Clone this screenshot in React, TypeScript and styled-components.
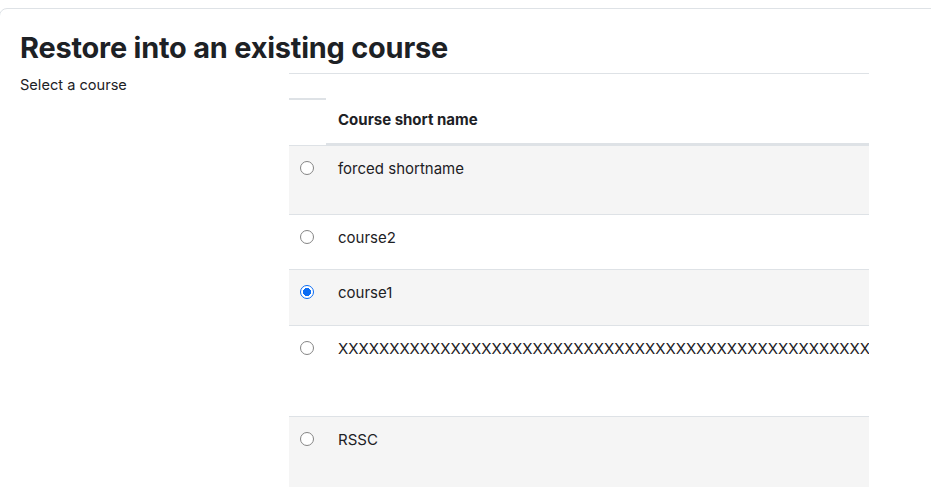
import React from 'react'
import styled, { createGlobalStyle } from 'styled-components'

const GlobalStyle = createGlobalStyle`
    html, body {
        margin: 0;
        padding: 0;
        background: #ffffff;
        overflow: hidden;
    }
    body {
        font-family: Inter, "Noto Sans", "Liberation Sans", sans-serif;
        color: #1d2125;
    }
`

type CourseRow = {
    name: string;
    height: number;
    checked?: boolean;
}

const courses: CourseRow[] = [
    { name: 'forced shortname', height: 69 },
    { name: 'course2', height: 55 },
    { name: 'course1', height: 56, checked: true },
    { name: 'X'.repeat(80), height: 91 },
    { name: 'RSSC', height: 80 },
]

export default function App() {
    return (
        <>
            <GlobalStyle />
            <Card>
                <Heading>Restore into an existing course</Heading>
                <FormRow>
                    <Label>Select a course</Label>
                    <Table>
                        <HeaderRow>
                            <HeaderRadioCell />
                            <HeaderCell>Course short name</HeaderCell>
                        </HeaderRow>
                        {courses.map((c, i) => (
                            <Row key={i} $striped={i % 2 === 0} $height={c.height}>
                                <RadioCell>
                                    <Radio type='radio' name='course' defaultChecked={c.checked} />
                                </RadioCell>
                                <NameCell>{c.name}</NameCell>
                            </Row>
                        ))}
                    </Table>
                </FormRow>
            </Card>
        </>
    )
}

const Card = styled.div`
    margin: 8px 0 0 -1px;
    width: calc(100% + 40px);
    border: 1px solid #dee2e6;
    border-radius: 8px;
    padding: 22px 0 0 20px;
    box-sizing: border-box;
`

const Heading = styled.h2`
    margin: 0 0 7.3px;
    font-size: 28.9px;
    font-weight: 700;
    line-height: 1.2;
    letter-spacing: -0.2px;
    color: #1d2125;
`

const FormRow = styled.div`
    display: grid;
    grid-template-columns: 269px 580px;
    align-items: start;
`

const Label = styled.div`
    padding-top: 1px;
    font-size: 14.6px;
    line-height: 22.5px;
`

const Table = styled.div`
    border-top: 1px solid #dee2e6;
    overflow: hidden;
    font-size: 15px;
    line-height: 22.5px;
`

const HeaderRow = styled.div`
    display: grid;
    grid-template-columns: 37px 1fr;
    align-items: start;
`

const HeaderRadioCell = styled.div`
    height: 24px;
    border-bottom: 2px solid #dee2e6;
`

const HeaderCell = styled.div`
    padding: 35px 12px 12px;
    font-weight: 700;
    border-bottom: 2px solid #dee2e6;
`

const Row = styled.div<{ $striped: boolean; $height: number }>`
    display: grid;
    grid-template-columns: 37px 1fr;
    height: ${p => p.$height}px;
    box-sizing: border-box;
    border-top: 1px solid #dee2e6;
    background: ${p => (p.$striped ? '#f5f5f5' : '#ffffff')};
`

const RadioCell = styled.div`
    padding: 15px 0 0 11px;
`

const NameCell = styled.div`
    padding: 12px 12px 0;
    white-space: nowrap;
    overflow: hidden;
`

const Radio = styled.input`
    appearance: none;
    -webkit-appearance: none;
    margin: 0;
    width: 14px;
    height: 14px;
    border-radius: 50%;
    border: 1px solid #858585;
    background: #ffffff;
    box-sizing: border-box;
    display: block;

    &:checked {
        border: 1px solid #0b6cf3;
        background: radial-gradient(circle, #0b6cf3 0 3.8px, #ffffff 4.3px 100%);
    }
`
